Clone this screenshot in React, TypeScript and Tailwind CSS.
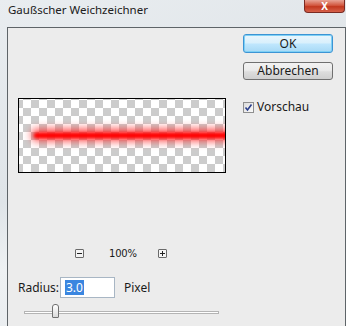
import React from "react";

export default function App() {
  const font = { fontFamily: '"Noto Sans", "DejaVu Sans", sans-serif' };
  return (
    <div
      className="w-[346px] h-[326px] overflow-hidden flex flex-col bg-[linear-gradient(160deg,#e9edf0_0%,#dfe4e8_45%,#eef1f3_60%,#e2e6ea_100%)] text-[#1a1a1a]"
      style={font}
    >
      {/* title bar */}
      <div className="h-[27px] flex items-start justify-between shrink-0">
        <div className="pl-[8px] pt-[1px] text-[11.5px] leading-[18px] text-[#202020]">Gaußscher Weichzeichner</div>
        <div className="mr-[1px] w-[41px] h-[13px] rounded-b-[4px] border border-t-0 border-[#7a2a22] bg-[linear-gradient(#e8a496_0%,#d2573f_45%,#c2381f_55%,#d6614a_100%)] flex items-center justify-center">
          <span className="text-white text-[10px] font-bold leading-[10px]">X</span>
        </div>
      </div>
      {/* body */}
      <div className="flex-1 flex">
        <div className="w-[7px] shrink-0" />
        <div className="flex-1 flex border-l border-t border-r border-[#5e6468] bg-[#ececec]">
          {/* left column */}
          <div className="pl-[10px] pt-[70px] flex flex-col w-[228px] shrink-0">
            <div className="relative w-[208px] h-[75px] border border-black overflow-hidden bg-white bg-[conic-gradient(#cccccc_25%,#ffffff_0_50%,#cccccc_0_75%,#ffffff_0)] bg-[length:16px_16px] bg-[position:4px_1px]">
              <div className="absolute left-[12px] right-[-20px] top-[30px] h-[12px] rounded-full bg-[#ff3030] blur-[4px] opacity-90" />
              <div className="absolute left-[15px] right-[-20px] top-[34px] h-[5px] rounded-full bg-[#ff0000] blur-[1.5px]" />
            </div>
            <div className="mt-[76px] h-[9px] flex items-center">
              <div className="ml-[57px] w-[9px] h-[9px] border border-[#6a6a6a] rounded-[1px] bg-[#f4f4f4] flex items-center justify-center">
                <div className="w-[5px] h-[1px] bg-[#222]" />
              </div>
              <div className="ml-[25px] text-[10px] leading-[9px] tracking-[-0.2px]" style={{ fontFamily: '"DejaVu Sans", sans-serif' }}>100%</div>
              <div className="ml-[21px] w-[9px] h-[9px] border border-[#6a6a6a] rounded-[1px] bg-[#f4f4f4] relative">
                <div className="absolute left-[1.5px] top-[3px] w-[5px] h-[1px] bg-[#222]" />
                <div className="absolute left-[3.5px] top-[1px] w-[1px] h-[5px] bg-[#222]" />
              </div>
            </div>
            <div className="mt-[19px] flex items-center h-[21px]">
              <div className="text-[12px] leading-[16px] w-[42px]">Radius:</div>
              <div className="w-[55px] h-[21px] border border-[#a8b6c4] bg-white flex items-center pl-[4px]">
                <span className="bg-[#3a86e0] text-white text-[12px] leading-[15px] px-[1px]">3.0</span>
              </div>
              <div className="ml-[9px] text-[12px] leading-[16px]">Pixel</div>
            </div>
            <div className="relative mt-[6px] h-[16px] ml-[6px] w-[195px]">
              <div className="absolute left-0 right-0 top-[7px] h-[3px] border border-[#b4b4b4] bg-white" />
              <div className="absolute left-[28px] top-[0px] w-[7px] h-[14px] border border-[#707070] rounded-t-[3px] rounded-b-[1px] bg-[linear-gradient(#ffffff,#dadada)]" />
            </div>
          </div>
          {/* right column */}
          <div className="ml-[7px] pt-[6px] flex flex-col w-[90px]">
            <div className="h-[19px] rounded-[3px] border border-[#3c94d4] shadow-[inset_0_0_0_1px_#7ed0f5] bg-[linear-gradient(#eaf6fd_0%,#d9f0fc_45%,#bee6fd_55%,#a7d9f5_100%)] flex items-center justify-center text-[12px] leading-[16px]">
              OK
            </div>
            <div className="mt-[9px] h-[18px] rounded-[3px] border border-[#707070] bg-[linear-gradient(#f2f2f2_0%,#ebebeb_45%,#dddddd_55%,#cfcfcf_100%)] flex items-center justify-center text-[12px] leading-[16px]">
              Abbrechen
            </div>
            <div className="mt-[19px] flex items-center">
              <div className="w-[11px] h-[11px] border border-[#8f8f8f] bg-[linear-gradient(135deg,#dcdcdc,#fafafa)] flex items-center justify-center">
                <svg width="9" height="9" viewBox="0 0 9 9">
                  <path d="M1.5 4.5 L3.5 7 L7.5 1.5" stroke="#2b3f8c" strokeWidth="1.6" fill="none" />
                </svg>
              </div>
              <div className="ml-[3px] text-[12px] leading-[16px]">Vorschau</div>
            </div>
          </div>
        </div>
      </div>
    </div>
  );
}
